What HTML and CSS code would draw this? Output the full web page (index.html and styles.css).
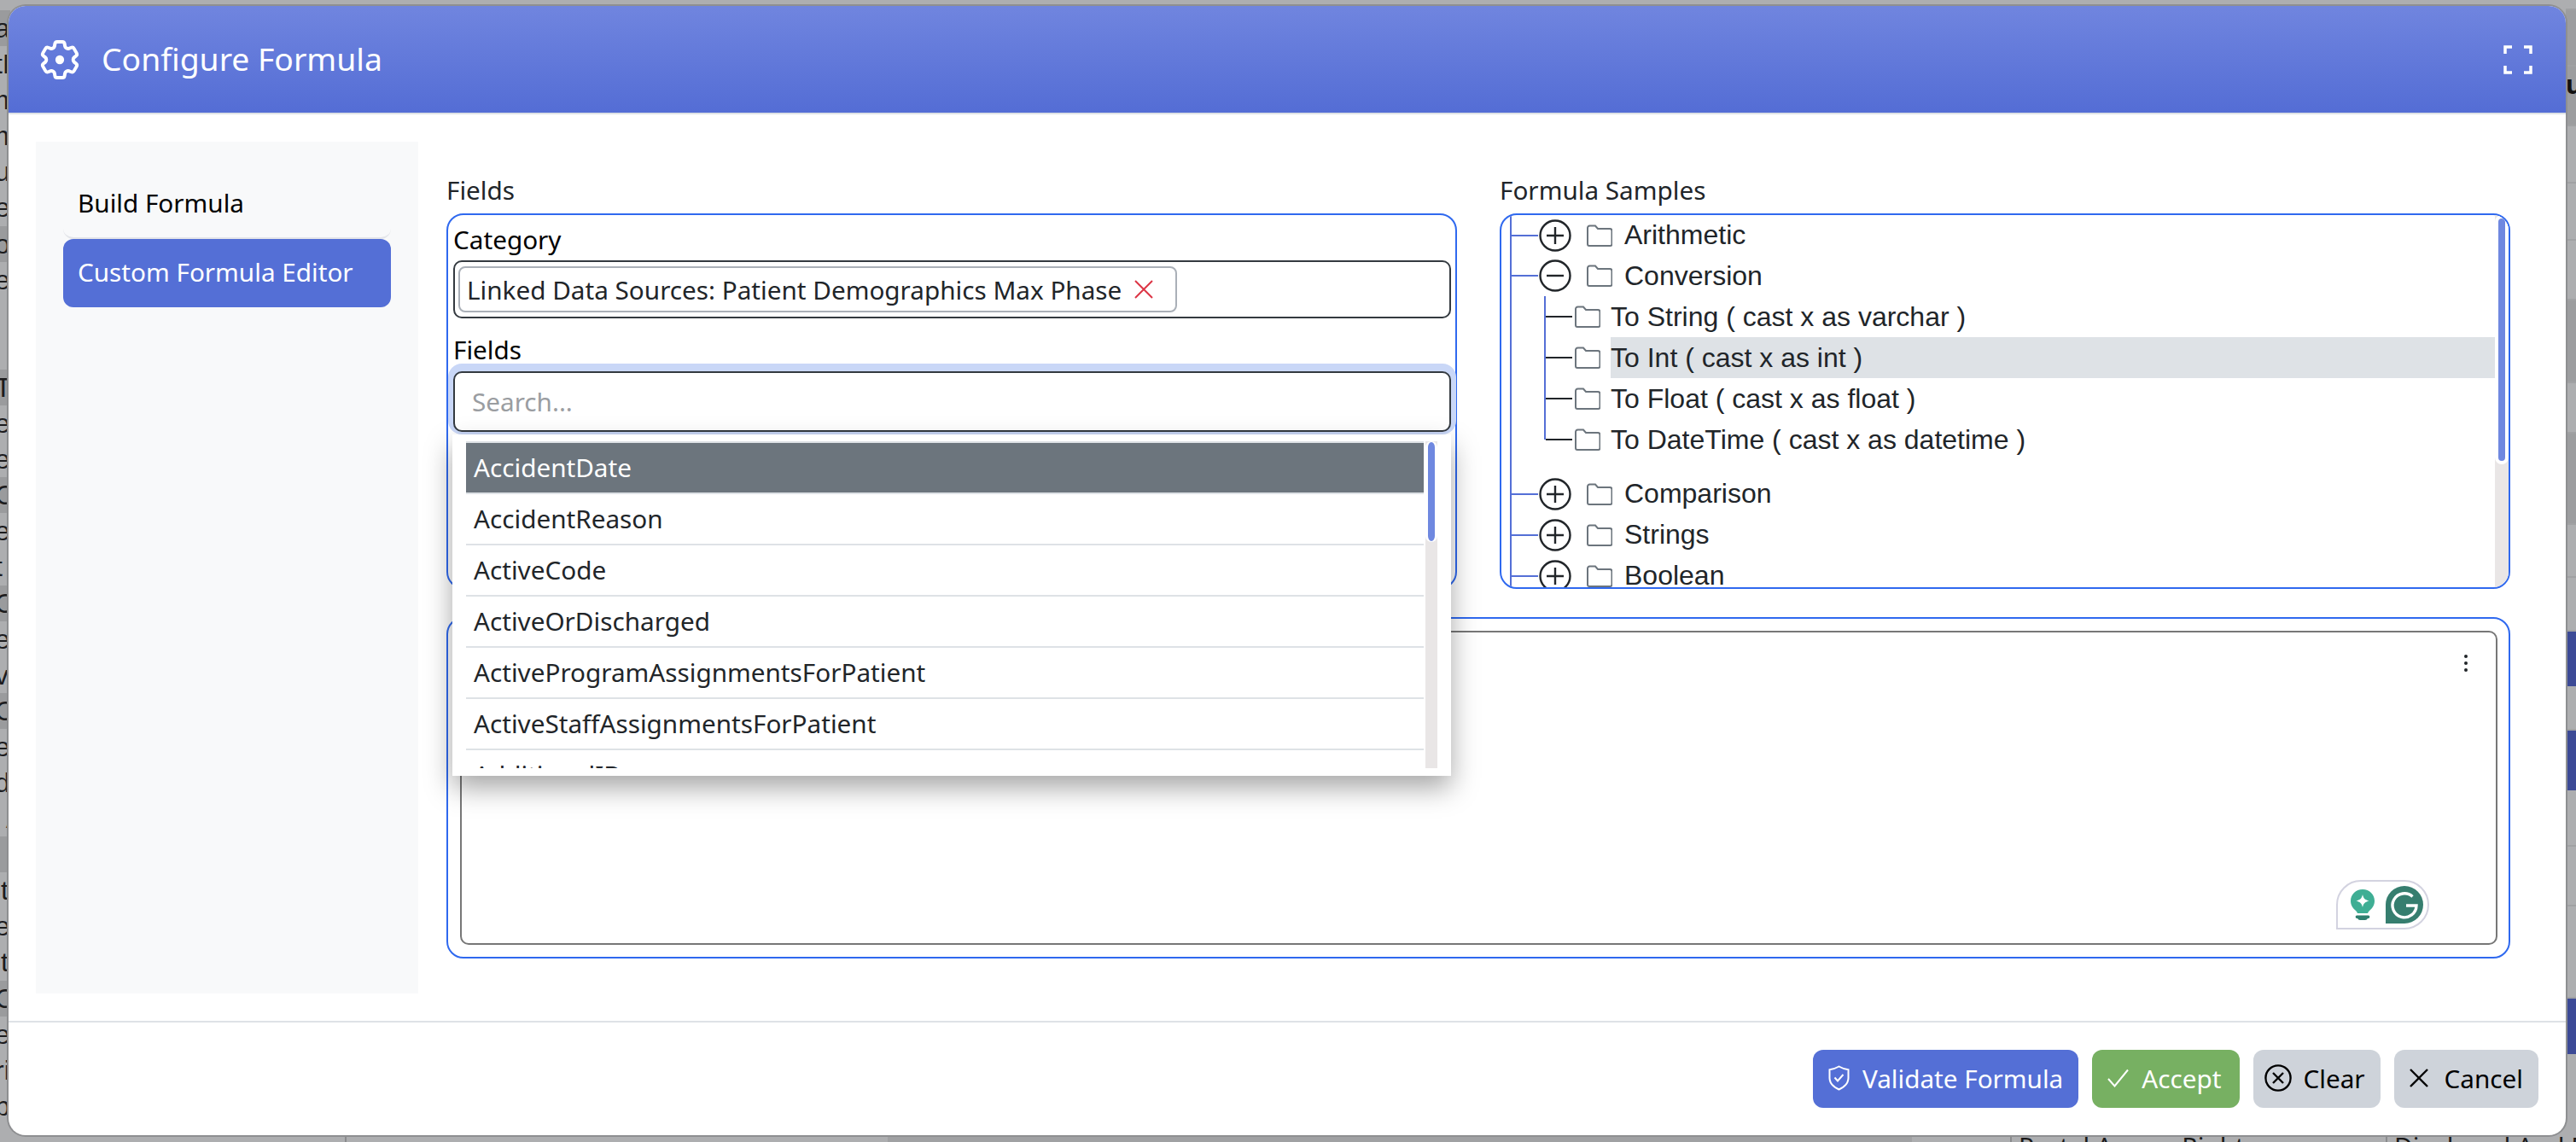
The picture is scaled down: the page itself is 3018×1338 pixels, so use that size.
FILE: index.html
```html
<!DOCTYPE html>
<html lang="en">
  <head>
    <meta charset="UTF-8" />
    <meta name="viewport" content="width=device-width, initial-scale=1.0" />
    <title>Configure Formula</title>
    <link rel="stylesheet" href="styles.css">
  </head>
  <body>
    <!-- page behind the dialog, only the edges show -->
    <div class="backdrop">
      <div class="bg-left">
        <div class="bg-row dark">ar</div>
        <div class="bg-row">tE</div>
        <div class="bg-row">m</div>
        <div class="bg-row">m</div>
        <div class="bg-row">ur</div>
        <div class="bg-row">e</div>
        <div class="bg-row dark">or</div>
        <div class="bg-row">ep</div>
        <div class="bg-row shift">I</div>
        <div class="bg-row shift">I</div>
        <div class="bg-row dark">Ti</div>
        <div class="bg-row">e</div>
        <div class="bg-row">e</div>
        <div class="bg-row dark">C</div>
        <div class="bg-row">e</div>
        <div class="bg-row">t</div>
        <div class="bg-row dark">O</div>
        <div class="bg-row">e</div>
        <div class="bg-row">vi</div>
        <div class="bg-row dark">O</div>
        <div class="bg-row">e</div>
        <div class="bg-row">d</div>
        <div class="bg-row shift">A</div>
        <div class="bg-row dark"></div>
        <div class="bg-row">it</div>
        <div class="bg-row">e</div>
        <div class="bg-row">it</div>
        <div class="bg-row dark">C</div>
        <div class="bg-row">e</div>
        <div class="bg-row">ri</div>
        <div class="bg-row">b</div>
      </div>
      <div class="bg-right">
        <div class="strip h-12"></div>
        <div class="strip h-66 dark"></div>
        <div class="strip h-70 dark"><span>uc</span></div>
        <div class="strip h-67"></div>
        <div class="strip h-67"></div>
        <div class="strip h-70"></div>
        <div class="strip h-97 dark"></div>
        <div class="strip h-59"></div>
        <div class="strip h-107 dark"></div>
        <div class="strip h-62"></div>
        <div class="strip h-63"></div>
        <div class="strip h-64 blue"></div>
        <div class="strip h-52"></div>
        <div class="strip h-70 blue"></div>
        <div class="strip h-66"></div>
        <div class="strip h-70"></div>
        <div class="strip h-108"></div>
        <div class="strip h-65 blue"></div>
      </div>
      <div class="bg-bottom">
        <div class="bg-cell w-404"></div>
        <div class="bg-cell w-636 ruled"></div>
        <div class="bg-cell w-1200 dark"></div>
        <div class="bg-cell w-115"></div>
        <div class="bg-cell w-440 ruled">Portal Access Rights</div>
        <div class="bg-cell ruled">Displayed And Edita</div>
      </div>
    </div>

    <div class="modal">
      <div class="modal-header">
        <svg class="gear" viewBox="0 0 24 24" fill="none" stroke="#fff" stroke-width="1.7" stroke-linejoin="round">
          <path d="M9.594 3.94c.09-.542.56-.94 1.11-.94h2.593c.55 0 1.02.398 1.11.94l.213 1.281c.063.374.313.686.645.87.074.04.147.083.22.127.325.196.72.257 1.075.124l1.217-.456a1.125 1.125 0 0 1 1.37.49l1.296 2.247a1.125 1.125 0 0 1-.26 1.431l-1.003.827c-.293.241-.438.613-.43.992a7.723 7.723 0 0 1 0 .255c-.008.378.137.75.43.991l1.004.827c.424.35.534.955.26 1.43l-1.298 2.247a1.125 1.125 0 0 1-1.369.491l-1.217-.456c-.355-.133-.75-.072-1.076.124a6.47 6.47 0 0 1-.22.128c-.331.183-.581.495-.644.869l-.213 1.281c-.09.543-.56.94-1.11.94h-2.594c-.55 0-1.019-.398-1.11-.94l-.213-1.281c-.062-.374-.312-.686-.644-.87a6.52 6.52 0 0 1-.22-.127c-.325-.196-.72-.257-1.076-.124l-1.217.456a1.125 1.125 0 0 1-1.369-.49l-1.297-2.247a1.125 1.125 0 0 1 .26-1.431l1.004-.827c.292-.24.437-.613.43-.991a6.932 6.932 0 0 1 0-.255c.007-.38-.138-.751-.43-.992l-1.004-.827a1.125 1.125 0 0 1-.26-1.43l1.297-2.247a1.125 1.125 0 0 1 1.37-.491l1.216.456c.356.133.751.072 1.076-.124.072-.044.146-.086.22-.128.332-.183.582-.495.644-.869l.214-1.28Z"/>
          <circle cx="12" cy="12" r="2.2" fill="#fff" stroke="none"/>
        </svg>
        <h1 class="modal-title">Configure Formula</h1>
        <svg class="fullscreen" viewBox="0 0 34 34" fill="none" stroke="#fff" stroke-width="3.5">
          <path d="M2 10V2H10M24 2H32V10M2 24V32H10M24 32H32V24"/>
        </svg>
      </div>

      <div class="modal-body">
        <div class="sidebar">
          <div class="nav-item">Build Formula</div>
          <div class="nav-item active">Custom Formula Editor</div>
        </div>

        <div class="main">
          <div class="top-row">
            <div class="column">
              <div class="box-label">Fields</div>
              <div class="outline fields-box">
                <div class="field-label">Category</div>
                <div class="select">
                  <span class="chip">Linked Data Sources: Patient Demographics Max Phase
                    <svg class="chip-x" viewBox="0 0 24 24" fill="none" stroke="#dc3545" stroke-width="2">
                      <path d="M2 2L22 22M22 2L2 22"/>
                    </svg>
                  </span>
                </div>
                <div class="field-label second">Fields</div>
                <div class="picker">
                  <input class="search" type="text" placeholder="Search..." />
                  <div class="dropdown">
                    <ul class="options">
                      <li class="selected">AccidentDate</li>
                      <li>AccidentReason</li>
                      <li>ActiveCode</li>
                      <li>ActiveOrDischarged</li>
                      <li>ActiveProgramAssignmentsForPatient</li>
                      <li>ActiveStaffAssignmentsForPatient</li>
                      <li>AdditionalID</li>
                    </ul>
                    <div class="scroll small"><div class="thumb"></div></div>
                  </div>
                </div>
              </div>
            </div>

            <div class="column">
              <div class="box-label">Formula Samples</div>
              <div class="outline samples-box">
                <div class="tree">
                  <div class="node">
                    <span class="twig"></span>
                    <svg class="toggle" viewBox="0 0 38 38" fill="none" stroke="#212529" stroke-width="2.4"><circle cx="19" cy="19" r="17.5"/><path d="M19 9V29M9 19H29"/></svg>
                    <svg class="folder" viewBox="0 0 30 26" fill="none" stroke="#6c757d" stroke-width="2"><path d="M1 23V4a2.500 2.500 0 0 1 2.500-2.500h6.500l3 3.500h14a2.500 2.500 0 0 1 2.500 2.500V23a2 2 0 0 1-2 2H3a2 2 0 0 1-2-2Z"/></svg>
                    <span class="node-text">Arithmetic</span>
                  </div>
                  <div class="node">
                    <span class="twig"></span>
                    <svg class="toggle" viewBox="0 0 38 38" fill="none" stroke="#212529" stroke-width="2.4"><circle cx="19" cy="19" r="17.5"/><path d="M9 19H29"/></svg>
                    <svg class="folder" viewBox="0 0 30 26" fill="none" stroke="#6c757d" stroke-width="2"><path d="M1 23V4a2.500 2.500 0 0 1 2.500-2.500h6.500l3 3.500h14a2.500 2.500 0 0 1 2.500 2.500V23a2 2 0 0 1-2 2H3a2 2 0 0 1-2-2Z"/></svg>
                    <span class="node-text">Conversion</span>
                  </div>
                  <div class="leaves">
                    <div class="leaf">
                      <span class="leaf-twig"></span>
                      <svg class="folder" viewBox="0 0 30 26" fill="none" stroke="#6c757d" stroke-width="2"><path d="M1 23V4a2.500 2.500 0 0 1 2.500-2.500h6.500l3 3.500h14a2.500 2.500 0 0 1 2.500 2.500V23a2 2 0 0 1-2 2H3a2 2 0 0 1-2-2Z"/></svg>
                      <span class="leaf-text">To String ( cast x as varchar )</span>
                    </div>
                    <div class="leaf">
                      <span class="leaf-twig"></span>
                      <svg class="folder" viewBox="0 0 30 26" fill="none" stroke="#6c757d" stroke-width="2"><path d="M1 23V4a2.500 2.500 0 0 1 2.500-2.500h6.500l3 3.500h14a2.500 2.500 0 0 1 2.500 2.500V23a2 2 0 0 1-2 2H3a2 2 0 0 1-2-2Z"/></svg>
                      <span class="leaf-text picked">To Int ( cast x as int )</span>
                    </div>
                    <div class="leaf">
                      <span class="leaf-twig"></span>
                      <svg class="folder" viewBox="0 0 30 26" fill="none" stroke="#6c757d" stroke-width="2"><path d="M1 23V4a2.500 2.500 0 0 1 2.500-2.500h6.500l3 3.500h14a2.500 2.500 0 0 1 2.500 2.500V23a2 2 0 0 1-2 2H3a2 2 0 0 1-2-2Z"/></svg>
                      <span class="leaf-text">To Float ( cast x as float )</span>
                    </div>
                    <div class="leaf">
                      <span class="leaf-twig"></span>
                      <svg class="folder" viewBox="0 0 30 26" fill="none" stroke="#6c757d" stroke-width="2"><path d="M1 23V4a2.500 2.500 0 0 1 2.500-2.500h6.500l3 3.500h14a2.500 2.500 0 0 1 2.500 2.500V23a2 2 0 0 1-2 2H3a2 2 0 0 1-2-2Z"/></svg>
                      <span class="leaf-text">To DateTime ( cast x as datetime )</span>
                    </div>
                  </div>
                  <div class="node">
                    <span class="twig"></span>
                    <svg class="toggle" viewBox="0 0 38 38" fill="none" stroke="#212529" stroke-width="2.4"><circle cx="19" cy="19" r="17.5"/><path d="M19 9V29M9 19H29"/></svg>
                    <svg class="folder" viewBox="0 0 30 26" fill="none" stroke="#6c757d" stroke-width="2"><path d="M1 23V4a2.500 2.500 0 0 1 2.500-2.500h6.500l3 3.500h14a2.500 2.500 0 0 1 2.500 2.500V23a2 2 0 0 1-2 2H3a2 2 0 0 1-2-2Z"/></svg>
                    <span class="node-text">Comparison</span>
                  </div>
                  <div class="node">
                    <span class="twig"></span>
                    <svg class="toggle" viewBox="0 0 38 38" fill="none" stroke="#212529" stroke-width="2.4"><circle cx="19" cy="19" r="17.5"/><path d="M19 9V29M9 19H29"/></svg>
                    <svg class="folder" viewBox="0 0 30 26" fill="none" stroke="#6c757d" stroke-width="2"><path d="M1 23V4a2.500 2.500 0 0 1 2.500-2.500h6.500l3 3.500h14a2.500 2.500 0 0 1 2.500 2.500V23a2 2 0 0 1-2 2H3a2 2 0 0 1-2-2Z"/></svg>
                    <span class="node-text">Strings</span>
                  </div>
                  <div class="node">
                    <span class="twig"></span>
                    <svg class="toggle" viewBox="0 0 38 38" fill="none" stroke="#212529" stroke-width="2.4"><circle cx="19" cy="19" r="17.5"/><path d="M19 9V29M9 19H29"/></svg>
                    <svg class="folder" viewBox="0 0 30 26" fill="none" stroke="#6c757d" stroke-width="2"><path d="M1 23V4a2.500 2.500 0 0 1 2.500-2.500h6.500l3 3.500h14a2.500 2.500 0 0 1 2.500 2.500V23a2 2 0 0 1-2 2H3a2 2 0 0 1-2-2Z"/></svg>
                    <span class="node-text">Boolean</span>
                  </div>
                </div>
                <div class="scroll"><div class="thumb"></div></div>
              </div>
            </div>
          </div>

          <div class="outline editor-box">
            <div class="editor">
              <svg class="dots" viewBox="0 0 6 22" fill="#212529"><circle cx="3" cy="3" r="2"/><circle cx="3" cy="11" r="2"/><circle cx="3" cy="19" r="2"/></svg>
              <div class="grammarly">
                <svg class="bulb" viewBox="0 0 30 38">
                  <path fill="#3fae94" d="M15 1C7 1 1 7 1 14.500c0 5 2.600 8.500 5.500 11 1.500 1.300 2 2.500 2.500 3.500h12c.5-1 1-2.200 2.500-3.500 2.900-2.500 5.500-6 5.500-11C29 7 23 1 15 1Z"/>
                  <path fill="#2f7f6f" d="M8 31.500h14a1 1 0 0 1-1 3.500 4 4 0 0 1-3 2h-6a4 4 0 0 1-3-2 1 1 0 0 1-1-3.500Z"/>
                  <path fill="#fff" d="M15 7c1 4.500 2.500 6 7.500 7.500-5 1.500-6.500 3-7.500 7.500-1-4.500-2.500-6-7.500-7.500C12.500 13 14 11.500 15 7Z"/>
                </svg>
                <svg class="g-logo" viewBox="0 0 44 44">
                  <path fill="#367e6f" d="M22 0a22 22 0 0 1 0 44H0V22A22 22 0 0 1 22 0Z"/>
                  <path fill="none" stroke="#fff" stroke-width="3.400" d="M31.500 12.500A14 14 0 1 0 36 23H24"/>
                </svg>
              </div>
            </div>
          </div>
        </div>
      </div>

      <div class="modal-footer">
        <button class="btn btn-blue">
          <svg class="btn-icon shield" viewBox="0 0 25 30" fill="none" stroke="#fff" stroke-width="2"><path d="M12.500 1.500C9 3.500 5.500 4.800 1.500 5.300V15c0 6 4.500 10.500 11 13.500 6.500-3 11-7.500 11-13.500V5.300c-4-.5-7.500-1.800-11-3.800Z"/><path d="M7.500 14.500l3.500 4 6.500-7.500"/></svg>
          Validate Formula
        </button>
        <button class="btn btn-green">
          <svg class="btn-icon check" viewBox="0 0 25 22" fill="none" stroke="#fff" stroke-width="2"><path d="M1 12l7.500 8.500L24 1.500"/></svg>
          Accept
        </button>
        <button class="btn btn-gray btn-clear">
          <svg class="btn-icon circle-x" viewBox="0 0 32 32" fill="none" stroke="#000" stroke-width="2.400"><circle cx="16" cy="16" r="14.600"/><path d="M10 10L22 22M22 10L10 22"/></svg>
          Clear
        </button>
        <button class="btn btn-gray">
          <svg class="btn-icon plain-x" viewBox="0 0 22 22" fill="none" stroke="#000" stroke-width="2.400"><path d="M1 1L21 21M21 1L1 21"/></svg>
          Cancel
        </button>
      </div>
    </div>
  </body>
</html>
```

FILE: styles.css
```css
* {
  box-sizing: border-box;
}
body {
  margin: 0;
  width: 3018px;
  height: 1338px;
  overflow: hidden;
  position: relative;
  background-color: #adaeb0;
  font-family: "Noto Sans", sans-serif;
  font-size: 29.7px;
  color: #212529;
}

/* page behind the dialog */
.backdrop {
  position: absolute;
  inset: 0;
  overflow: hidden;
}
.bg-left {
  position: absolute;
  left: 0;
  top: 12px;
  width: 12px;
  overflow: hidden;
}
.bg-row {
  height: 42.1px;
  line-height: 42px;
  white-space: nowrap;
  color: #1c1c1e;
  text-indent: -6px;
  font-family: "Liberation Sans", sans-serif;
  font-size: 32px;
}
.bg-row.shift {
  text-indent: 7px;
}
.bg-row.dark {
  background-color: #9a9b9d;
}
.bg-right {
  position: absolute;
  right: 0;
  top: 0;
  width: 12px;
  overflow: hidden;
}
.strip {
  border-bottom: 2px solid #a0a1a3;
  overflow: hidden;
  white-space: nowrap;
  font-size: 30px;
  font-weight: bold;
  color: #111;
}
.strip.dark {
  background-color: #9c9d9f;
}
.strip.blue {
  background-color: #3c4a96;
  border-bottom: 0;
}
.h-12 { height: 12px; }
.h-52 { height: 52px; }
.h-59 { height: 59px; }
.h-62 { height: 62px; }
.h-63 { height: 63px; }
.h-64 { height: 64px; }
.h-65 { height: 65px; }
.h-66 { height: 66px; }
.h-67 { height: 67px; }
.h-70 { height: 70px; }
.h-97 { height: 97px; }
.h-107 { height: 107px; }
.h-108 { height: 108px; }
.bg-bottom {
  position: absolute;
  left: 0;
  right: 0;
  top: 1330px;
  height: 8px;
  display: flex;
  overflow: hidden;
}
.bg-cell {
  flex-shrink: 0;
  height: 40px;
  padding-left: 8px;
  white-space: nowrap;
  line-height: 26px;
  color: #1a1a1a;
}
.bg-cell.ruled {
  border-left: 2px solid #8a8b8d;
}
.bg-cell.dark {
  background-color: #a0a1a3;
}
.w-404 { width: 404px; }
.w-636 { width: 636px; }
.w-1200 { width: 1200px; }
.w-115 { width: 115px; }
.w-440 { width: 440px; }

/* dialog */
.modal {
  position: absolute;
  left: 10px;
  top: 7px;
  width: 2996px;
  height: 1323px;
  display: flex;
  flex-direction: column;
  background: #fff;
  border-radius: 20px;
  box-shadow: 0 0 0 2px #8e8f91;
}
.modal-header {
  height: 127px;
  display: flex;
  align-items: center;
  flex-shrink: 0;
  padding: 0 39px 0 32px;
  background: linear-gradient(to bottom, #7085df, #546dd5);
  border-bottom: 2px solid #dee2e6;
  border-radius: 20px 20px 0 0;
  color: #fff;
}
.gear {
  width: 56px;
  height: 56px;
}
.modal-title {
  margin: 0 0 0 21px;
  flex: 1;
  font-size: 37.3px;
  font-weight: 400;
  line-height: 1.2;
}
.fullscreen {
  width: 34px;
  height: 34px;
}

.modal-body {
  flex: 1;
  display: flex;
  gap: 33px;
  padding: 32px;
  min-height: 0;
}
.sidebar {
  width: 448px;
  flex-shrink: 0;
  padding: 34px 32px;
  background-color: #f8f9fa;
}
.nav-item {
  height: 80px;
  padding: 0 17px 3px;
  display: flex;
  align-items: center;
  color: #000;
  border-radius: 12px;
}
.nav-item:first-child {
  border-bottom: 2px solid #e3e5e9;
}
.nav-item.active {
  background-color: #546fd6;
  color: #fff;
}

.main {
  flex: 1;
  display: flex;
  flex-direction: column;
  gap: 33px;
  padding: 39px 33px 0 0;
}
.top-row {
  display: flex;
  gap: 50px;
}
.column {
  flex: 1;
  min-width: 0;
}
.box-label {
  height: 45px;
  line-height: 36px;
}
.outline {
  border: 2px solid #2f69ef;
  border-radius: 20px;
}

/* left box */
.fields-box {
  height: 440px;
  padding: 7px 5px 0 6px;
}
.field-label {
  height: 46px;
  line-height: 44px;
  color: #000;
}
.field-label.second {
  margin-top: 14px;
  line-height: 46px;
}
.select {
  height: 68px;
  padding: 5px 4px;
  border: 2px solid #343a40;
  border-radius: 10px;
}
.chip {
  display: inline-flex;
  align-items: center;
  gap: 14px;
  height: 54px;
  padding: 0 8px;
  border: 2px solid #aab0b8;
  border-radius: 8px;
  background: #fff;
}
.chip-x {
  width: 24px;
  height: 24px;
  margin-right: 17px;
}
.picker {
  position: relative;
  margin-top: 2px;
}
.search {
  display: block;
  width: 100%;
  height: 71px;
  padding: 0 20px;
  border: 2px solid #343a40;
  border-radius: 10px;
  background: #fff;
  font-family: inherit;
  font-size: inherit;
  color: #212529;
  outline: none;
  box-shadow: 0 -3px 0 6px #c9d7f7;
}
.search::placeholder {
  color: #9a9da1;
}
.dropdown {
  position: absolute;
  left: -1px;
  right: 0;
  top: 74px;
  height: 400px;
  z-index: 5;
  display: flex;
  gap: 2px;
  padding: 8px 16px 9px 16px;
  background: #fff;
  box-shadow: 0 14px 30px rgba(0, 0, 0, 0.35);
}
.options {
  flex: 1;
  margin: 0;
  padding: 0;
  list-style: none;
  border-top: 2px solid #dee2e6;
  overflow: hidden;
}
.options li {
  height: 60px;
  padding: 0 9px;
  line-height: 58px;
  border-bottom: 2px solid #dee2e6;
}
.options li.selected {
  background-color: #6c757d;
  background-clip: padding-box;
  color: #fff;
}

/* right box */
.samples-box {
  height: 440px;
  display: flex;
  overflow: hidden;
  font-family: "Liberation Sans", Arial, sans-serif;
  font-size: 32px;
}
.tree {
  flex: 1;
  min-width: 0;
  margin-left: 10px;
  border-left: 2px solid #546fd6;
}
.node {
  height: 47.5px;
  display: flex;
  align-items: center;
}
.leaves + .node ~ .node {
  height: 48px;
}
.twig {
  width: 31px;
  height: 2px;
  margin-right: 1px;
  background-color: #546fd6;
}
.toggle {
  width: 38px;
  height: 38px;
  margin-right: 18px;
}
.folder {
  width: 30px;
  height: 26px;
  flex-shrink: 0;
}
.node-text {
  margin-left: 14px;
}
.leaves {
  position: relative;
  height: 192px;
  margin: 0 0 16px 38px;
}
.leaves::before {
  content: "";
  position: absolute;
  left: 0;
  top: 0;
  bottom: 24px;
  width: 2px;
  background-color: #546fd6;
}
.leaf {
  height: 48px;
  display: flex;
  align-items: center;
}
.leaf-twig {
  width: 31px;
  height: 2px;
  margin-right: 3px;
  margin-left: 2px;
  background-color: #212529;
}
.leaf-text {
  flex: 1;
  height: 48px;
  margin-left: 12px;
  line-height: 48px;
}
.leaf-text.picked {
  background-color: #dee2e6;
}

/* scrollbars */
.scroll {
  width: 16px;
  flex-shrink: 0;
  background-color: #e9e6e6;
}
.thumb {
  height: 292px;
  background-color: #6f88e0;
  border: 4px solid #fff;
  border-radius: 8px;
}
.scroll.small {
  width: 14px;
}
.scroll.small .thumb {
  height: 118px;
  border-width: 1px 3px;
}

/* editor */
.editor-box {
  height: 400px;
  padding: 14px 13px 14px 14px;
}
.editor {
  position: relative;
  height: 100%;
  border: 2px solid #777;
  border-radius: 10px;
}
.dots {
  position: absolute;
  right: 32px;
  top: 25px;
  width: 6px;
  height: 22px;
}
.grammarly {
  position: absolute;
  right: 78px;
  bottom: 16px;
  width: 109px;
  height: 58px;
  display: flex;
  align-items: center;
  gap: 12px;
  padding-left: 14px;
  border: 2px solid #d3d3e0;
  border-radius: 29px 29px 29px 0;
  background: #fff;
}
.bulb {
  width: 30px;
  height: 38px;
}
.g-logo {
  width: 44px;
  height: 44px;
}

/* footer */
.modal-footer {
  height: 134px;
  flex-shrink: 0;
  display: flex;
  justify-content: flex-end;
  gap: 16px;
  padding: 32px 32px 0 0;
  border-top: 2px solid #dee2e6;
}
.btn {
  height: 68px;
  display: flex;
  align-items: center;
  padding: 0 18px 2px;
  border: 0;
  border-radius: 12px;
  font-family: inherit;
  font-size: inherit;
}
.btn-blue {
  background-color: #546fd6;
  color: #fff;
}
.btn-green {
  padding-right: 22px;
  background-color: #77b062;
  color: #fff;
}
.btn-gray {
  background-color: #ced3da;
  color: #000;
}
.btn-clear {
  padding-left: 13px;
}
.btn-icon {
  flex-shrink: 0;
  margin-right: 15px;
}
.shield {
  width: 25px;
  height: 30px;
}
.check {
  width: 25px;
  height: 22px;
}
.circle-x {
  width: 32px;
  height: 32px;
  margin-right: 13px;
}
.plain-x {
  width: 22px;
  height: 22px;
  margin-right: 19px;
}
```
